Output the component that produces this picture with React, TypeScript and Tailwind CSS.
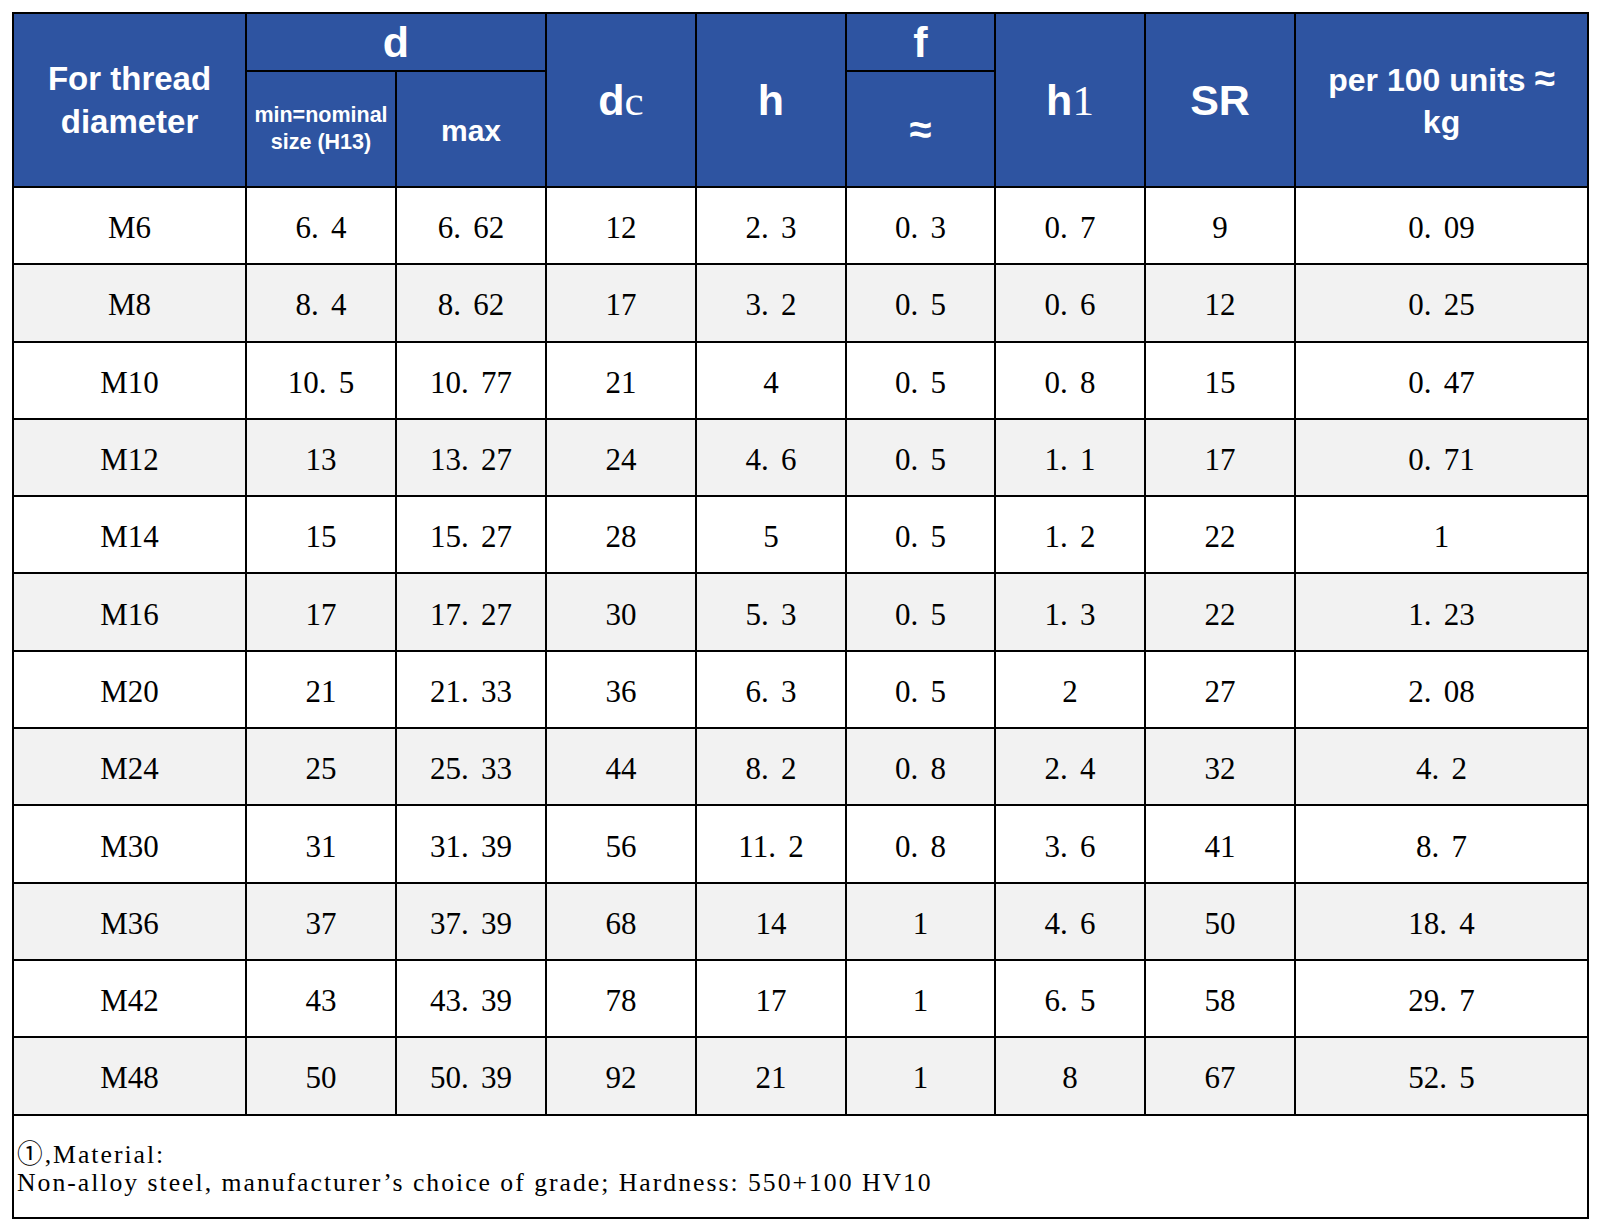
import React from 'react';

const rows: string[][] = [
  ['M6', '6.4', '6.62', '12', '2.3', '0.3', '0.7', '9', '0.09'],
  ['M8', '8.4', '8.62', '17', '3.2', '0.5', '0.6', '12', '0.25'],
  ['M10', '10.5', '10.77', '21', '4', '0.5', '0.8', '15', '0.47'],
  ['M12', '13', '13.27', '24', '4.6', '0.5', '1.1', '17', '0.71'],
  ['M14', '15', '15.27', '28', '5', '0.5', '1.2', '22', '1'],
  ['M16', '17', '17.27', '30', '5.3', '0.5', '1.3', '22', '1.23'],
  ['M20', '21', '21.33', '36', '6.3', '0.5', '2', '27', '2.08'],
  ['M24', '25', '25.33', '44', '8.2', '0.8', '2.4', '32', '4.2'],
  ['M30', '31', '31.39', '56', '11.2', '0.8', '3.6', '41', '8.7'],
  ['M36', '37', '37.39', '68', '14', '1', '4.6', '50', '18.4'],
  ['M42', '43', '43.39', '78', '17', '1', '6.5', '58', '29.7'],
  ['M48', '50', '50.39', '92', '21', '1', '8', '67', '52.5'],
];

const widths = ['w-[233px]', 'w-[150px]', 'w-[150px]', 'w-[150px]', 'w-[150px]', 'w-[149px]', 'w-[150px]', 'w-[150px]', 'w-[293px]'];

// the period sits in a wide box, like the half-width glyph of the source font
function Num({ value }: { value: string }) {
  const [whole, frac] = value.split('.');
  if (frac === undefined) return <>{value}</>;
  return (
    <>
      {whole}
      <span className="inline-block w-[20px] text-left">.</span>
      {frac}
    </>
  );
}

const th = "border-2 border-black bg-[#2e54a1] text-white text-center align-middle font-bold font-['Liberation_Sans',Arial,sans-serif] p-0";

export default function App() {
  return (
    <div className="bg-white min-h-[1231px] w-[1600px] pt-[12px] pl-[12px]">
      <table className="table-fixed border-collapse w-[1575px] border-2 border-black">
        <colgroup>
          {widths.map((w, i) => (
            <col key={i} className={w} />
          ))}
        </colgroup>
        <thead>
          <tr className="h-[58px]">
            <th rowSpan={2} className={`${th} text-[33px] leading-[43px]`}>
              For thread
              <br />
              diameter
            </th>
            <th colSpan={2} className={`${th} text-[43px] leading-none`}>
              d
            </th>
            <th rowSpan={2} className={`${th} text-[43px] leading-none`}>
              d<span className="font-['Liberation_Serif','Times_New_Roman',serif] font-normal">c</span>
            </th>
            <th rowSpan={2} className={`${th} text-[43px] leading-none`}>
              h
            </th>
            <th className={`${th} text-[43px] leading-none`}>f</th>
            <th rowSpan={2} className={`${th} text-[43px] leading-none`}>
              h<span className="font-['Liberation_Serif','Times_New_Roman',serif] font-normal">1</span>
            </th>
            <th rowSpan={2} className={`${th} text-[43px] leading-none`}>
              SR
            </th>
            <th rowSpan={2} className={`${th} text-[32px] leading-[42px]`}>
              per 100 units <span className="text-[37px]">≈</span>
              <br />
              kg
            </th>
          </tr>
          <tr className="h-[116px]">
            <th className={`${th} text-[21.5px] leading-[26.6px]`}>
              min=nominal
              <br />
              size (H13)
            </th>
            <th className={`${th} text-[30px] leading-none pt-[4px]`}>max</th>
            <th className={`${th} text-[40px] leading-none`}>≈</th>
          </tr>
        </thead>
        <tbody className="font-['Liberation_Serif','Times_New_Roman',serif] text-[31px] text-black">
          {rows.map((row, r) => (
            <tr key={r} className={`h-[77.3px] ${r % 2 === 1 ? 'bg-[#f2f2f2]' : 'bg-white'}`}>
              {row.map((cell, c) => (
                <td key={c} className="border-2 border-black text-center align-middle leading-none p-0 pt-[4px]">
                  <Num value={cell} />
                </td>
              ))}
            </tr>
          ))}
          <tr className="h-[103px] bg-white">
            <td
              colSpan={9}
              className="border-2 border-black align-top text-left pt-[25px] pl-[3px] font-['Liberation_Serif','Times_New_Roman','Noto_Sans_CJK_SC',serif] text-[25.7px] leading-[28.5px] tracking-[2px] text-black"
            >
              ①,Material:
              <br />
              Non-alloy steel, manufacturer’s choice of grade; Hardness: 550+100 HV10
            </td>
          </tr>
        </tbody>
      </table>
    </div>
  );
}
